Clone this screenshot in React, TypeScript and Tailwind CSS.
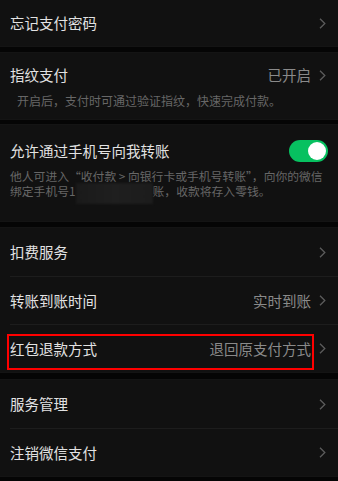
import type { ReactNode } from "react";

function Chevron() {
  return (
    <svg width="7" height="11" viewBox="0 0 7 11" fill="none" className="shrink-0">
      <path d="M1 0.8L5.8 5.5L1 10.2" stroke="#5c5c5c" strokeWidth="1.3" />
    </svg>
  );
}

function Row({
  title,
  value,
  divider,
  children,
}: {
  title: string;
  value?: string;
  divider?: boolean;
  children?: ReactNode;
}) {
  return (
    <div className="relative h-[48px] pl-[10px]">
      <div
        className={
          "flex h-full items-center pr-[12px] " +
          (divider ? "border-t border-[#1d1d1d]" : "")
        }
      >
        <span className="flex-1 text-[14.5px] text-[#e2e2e2]">{title}</span>
        {value && <span className="mr-[8px] text-[14.5px] text-[#8a8a8a]">{value}</span>}
        <Chevron />
      </div>
      {children}
    </div>
  );
}

function Gap({ h }: { h: string }) {
  return <div className={"border-y border-[#141414] bg-[#050505] " + h} />;
}

export default function App() {
  return (
    <div
      className="h-[481px] w-[338px] overflow-hidden bg-[#050505]"
      style={{ fontFamily: '"Noto Sans CJK SC", "Liberation Sans", sans-serif' }}
    >
      <div className="flex h-[46px] items-center bg-[#111111] pl-[10px] pr-[12px]">
        <span className="flex-1 text-[14.5px] text-[#e2e2e2]">忘记支付密码</span>
        <Chevron />
      </div>
      <Gap h="h-[7px]" />

      <div className="h-[66px] bg-[#111111] pl-[10px] pr-[12px] pt-[12px]">
        <div className="flex h-[20px] items-center">
          <span className="flex-1 text-[14.5px] text-[#e2e2e2]">指纹支付</span>
          <span className="mr-[8px] text-[14.5px] text-[#8a8a8a]">已开启</span>
          <Chevron />
        </div>
        <div className="mt-[8px] pl-[7px] text-[12px] leading-[16px] text-[#676767]">
          开启后，支付时可通过验证指纹，快速完成付款。
        </div>
      </div>
      <Gap h="h-[6px]" />

      <div className="h-[96px] bg-[#111111] pl-[10px] pr-[10px] pt-[15px]">
        <div className="flex h-[22px] items-center">
          <span className="flex-1 text-[14.5px] text-[#e2e2e2]">允许通过手机号向我转账</span>
          <div className="flex h-[22px] w-[39px] items-center justify-end rounded-full bg-[#07c160] pr-[2px]">
            <div className="h-[18px] w-[18px] rounded-full bg-white" />
          </div>
        </div>
        <div className="mt-[6px] text-[11.8px] leading-[15px] text-[#676767]">
          <div className="whitespace-nowrap">他人可进入“收付款 &gt; 向银行卡或手机号转账”，向你的微信</div>
          <div className="whitespace-nowrap">
            绑定手机号1
            <span className="relative inline-block h-[15px] w-[77px] align-top">
              <span className="absolute inset-x-0 top-0 bottom-[-6px] bg-gradient-to-r from-[#1a1a1a] via-[#1f1f1f] to-[#1c1c1c] blur-[1px]" />
            </span>
            账，收款将存入零钱。
          </div>
        </div>
      </div>
      <Gap h="h-[7px]" />

      <div className="bg-[#111111]">
        <Row title="扣费服务" />
        <Row title="转账到账时间" value="实时到账" divider />
        <Row title="红包退款方式" value="退回原支付方式" divider>
          <div className="pointer-events-none absolute left-[7px] top-[10px] h-[36px] w-[307px] border-2 border-[#ff0000]" />
        </Row>
      </div>
      <Gap h="h-[8px]" />

      <div className="bg-[#111111]">
        <Row title="服务管理" />
        <Row title="注销微信支付" divider />
      </div>
      <Gap h="h-[8px]" />
    </div>
  );
}
